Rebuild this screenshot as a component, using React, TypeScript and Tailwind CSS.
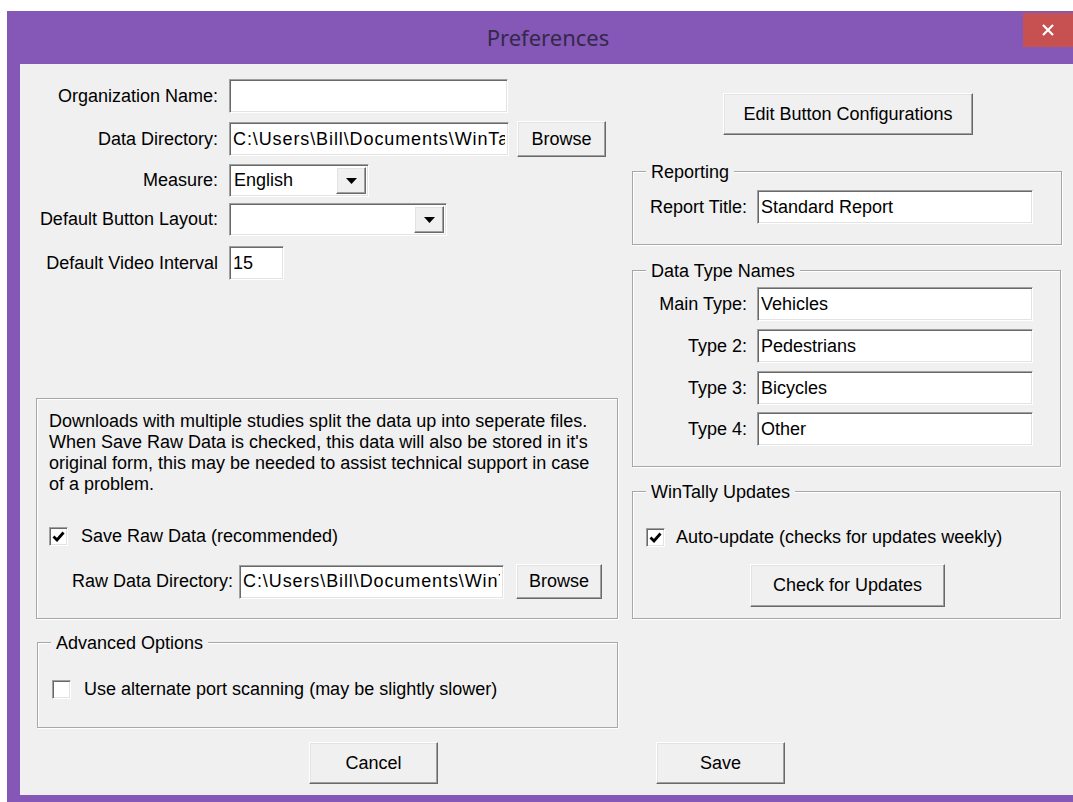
import type { ReactNode } from 'react';

const sunken =
  'border border-t-[#a0a0a0] border-l-[#a0a0a0] border-b-white border-r-white shadow-[inset_1px_1px_0_#696969,inset_-1px_-1px_0_#e3e3e3]';
const raised =
  'border border-t-white border-l-white border-b-[#696969] border-r-[#696969] shadow-[inset_-1px_-1px_0_#a0a0a0,inset_1px_1px_0_#e3e3e3]';

function Field({ value = '', className = '' }: { value?: string; className?: string }) {
  return (
    <input
      readOnly
      value={value}
      className={`${sunken} h-[34px] bg-white px-[3px] font-['Liberation_Sans',Arial,sans-serif] text-[18px] text-black outline-none ${className}`}
    />
  );
}

function Btn({ children, className = '' }: { children: ReactNode; className?: string }) {
  return (
    <button
      className={`${raised} flex items-center justify-center bg-[#f0f0f0] text-[18px] text-black ${className}`}
    >
      {children}
    </button>
  );
}

function Combo({ value = '', className = '' }: { value?: string; className?: string }) {
  return (
    <div className={`${sunken} flex h-[33px] items-stretch bg-white p-[2px] ${className}`}>
      <span className="flex flex-1 items-center overflow-hidden whitespace-nowrap pl-[2px]">{value}</span>
      <span className={`${raised} flex w-[30px] items-center justify-center bg-[#f0f0f0]`}>
        <svg width="11" height="6" viewBox="0 0 11 6">
          <path d="M0 0h11L5.5 6Z" fill="#000" />
        </svg>
      </span>
    </div>
  );
}

function Check({ checked }: { checked?: boolean }) {
  return (
    <span className={`${sunken} flex h-[19px] w-[19px] shrink-0 items-center justify-center bg-white`}>
      {checked && (
        <svg width="13" height="11" viewBox="0 0 13 11">
          <path d="M1.5 5.5l3.5 3.5 6.5-7.5" fill="none" stroke="#000" strokeWidth="2.8" />
        </svg>
      )}
    </span>
  );
}

function Group({
  legend,
  className = '',
  children,
}: {
  legend?: string;
  className?: string;
  children: ReactNode;
}) {
  return (
    <div
      className={`relative border border-[#a7a7a7] shadow-[inset_1px_1px_0_#fff,1px_1px_0_#fff] ${className}`}
    >
      {legend && (
        <span className="absolute left-[13px] top-[-10px] bg-[#f0f0f0] px-[5px] leading-[21px]">{legend}</span>
      )}
      {children}
    </div>
  );
}

function TypeRow({ label, value, className = '' }: { label: string; value: string; className?: string }) {
  return (
    <div className={`flex items-center ${className}`}>
      <span className="w-[114px] text-right">{label}</span>
      <Field value={value} className="ml-[10px] w-[276px]" />
    </div>
  );
}

function FormRow({ label, children, className = '' }: { label: string; children: ReactNode; className?: string }) {
  return (
    <div className={`flex items-center ${className}`}>
      <span className="w-[198px] whitespace-nowrap text-right">{label}</span>
      <div className="ml-[11px] flex items-center">{children}</div>
    </div>
  );
}

const dataPath = 'C:\\Users\\Bill\\Documents\\WinTally';

export default function App() {
  return (
    <div className="min-h-screen bg-white pl-[7px] pt-[11px] font-['Liberation_Sans',Arial,sans-serif] text-[18px] text-black">
      <div className="flex h-[791px] w-[1066px] flex-col bg-[#8557b7]">
        {/* title bar */}
        <div className="flex h-[53px] items-start">
          <div className="flex h-full flex-1 items-center justify-center pl-[66px] font-['Noto_Sans',sans-serif] text-[22px] text-[#33294a]">
            Preferences
          </div>
          <div className="mt-[2px] flex h-[34px] w-[50px] items-center justify-center bg-[#c75050]">
            <svg width="12" height="12" viewBox="0 0 12 12">
              <path d="M1 1l10 10M11 1L1 11" stroke="#fff" strokeWidth="2.2" />
            </svg>
          </div>
        </div>

        <div className="mb-[7px] ml-[13px] flex flex-1 flex-col bg-[#f0f0f0]">
          <div className="flex">
            {/* left column */}
            <div className="flex w-[600px] flex-col">
              <FormRow label="Organization Name:" className="mt-[15px] h-[34px]">
                <Field className="w-[279px]" />
              </FormRow>
              <FormRow label="Data Directory:" className="mt-[8px] h-[36px]">
                <Field value={dataPath} className="w-[280px] tracking-[0.9px]" />
                <Btn className="ml-[8px] h-[36px] w-[89px]">Browse</Btn>
              </FormRow>
              <FormRow label="Measure:" className="mt-[7px] h-[33px]">
                <Combo value="English" className="w-[140px]" />
              </FormRow>
              <FormRow label="Default Button Layout:" className="mt-[6px] h-[33px]">
                <Combo className="w-[218px]" />
              </FormRow>
              <FormRow label="Default Video Interval" className="mt-[10px] h-[34px]">
                <Field value="15" className="w-[55px]" />
              </FormRow>

              <Group className="ml-[16px] mt-[118px] h-[221px] w-[582px]">
                <p className="pl-[12px] pt-[12px] leading-[21px]">
                  Downloads with multiple studies split the data up into seperate files.
                  <br />
                  When Save Raw Data is checked, this data will also be stored in it's
                  <br />
                  original form, this may be needed to assist technical support in case
                  <br />
                  of a problem.
                </p>
                <label className="ml-[12px] mt-[31px] flex h-[21px] items-center gap-[13px]">
                  <Check checked />
                  Save Raw Data (recommended)
                </label>
                <div className="ml-[35px] mt-[17px] flex items-center">
                  <span>Raw Data Directory:</span>
                  <Field value={dataPath} className="ml-[6px] h-[34px] w-[265px] tracking-[0.9px]" />
                  <Btn className="ml-[12px] h-[35px] w-[86px]">Browse</Btn>
                </div>
              </Group>

              <Group legend="Advanced Options" className="ml-[17px] mt-[23px] h-[86px] w-[581px]">
                <label className="ml-[14px] mt-[36px] flex h-[21px] items-center gap-[13px]">
                  <Check />
                  Use alternate port scanning (may be slightly slower)
                </label>
              </Group>
            </div>

            {/* right column */}
            <div className="flex w-[453px] flex-col">
              <Btn className="ml-[103px] mt-[29px] h-[42px] w-[250px]">Edit Button Configurations</Btn>

              <Group legend="Reporting" className="ml-[12px] mt-[36px] h-[74px] w-[430px]">
                <TypeRow label="Report Title:" value="Standard Report" className="mt-[18px]" />
              </Group>

              <Group legend="Data Type Names" className="ml-[12px] mt-[25px] h-[197px] w-[429px]">
                <TypeRow label="Main Type:" value="Vehicles" className="mt-[16px]" />
                <TypeRow label="Type 2:" value="Pedestrians" className="mt-[8px]" />
                <TypeRow label="Type 3:" value="Bicycles" className="mt-[8px]" />
                <TypeRow label="Type 4:" value="Other" className="mt-[7px]" />
              </Group>

              <Group legend="WinTally Updates" className="ml-[12px] mt-[24px] h-[128px] w-[429px]">
                <label className="ml-[13px] mt-[35px] flex h-[21px] items-center gap-[11px]">
                  <Check checked />
                  Auto-update (checks for updates weekly)
                </label>
                <Btn className="ml-[117px] mt-[16px] h-[43px] w-[195px]">Check for Updates</Btn>
              </Group>
            </div>
          </div>

          {/* dialog buttons */}
          <div className="mt-[14px] flex">
            <Btn className="ml-[289px] h-[42px] w-[129px]">Cancel</Btn>
            <Btn className="ml-[218px] h-[42px] w-[129px]">Save</Btn>
          </div>
        </div>
      </div>
    </div>
  );
}
